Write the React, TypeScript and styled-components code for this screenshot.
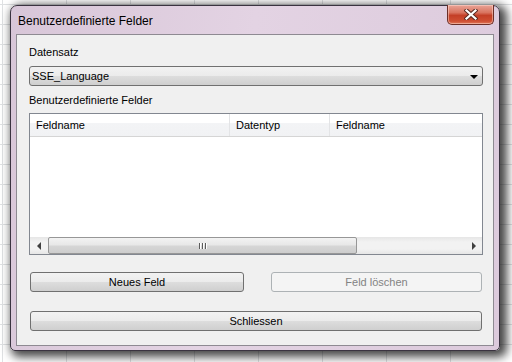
import styled, { createGlobalStyle } from "styled-components";

// Spalten der Feldliste
const columns = [
  { title: "Feldname", width: 200 },
  { title: "Datentyp", width: 100 },
  { title: "Feldname", width: 0 },
];

export default function App() {
  return (
    <>
      <GlobalStyle />
      <Sheet>
        <Window>
          <TitleBar>
            <Title>Benutzerdefinierte Felder</Title>
            <CloseButton aria-label="Schliessen">
              <svg width="14" height="11" viewBox="0 0 14 11">
                <path
                  d="M2.5 1.5 L11.5 9.5 M11.5 1.5 L2.5 9.5"
                  stroke="#5a2a22"
                  strokeWidth="4.2"
                  strokeLinecap="square"
                />
                <path
                  d="M2.5 1.5 L11.5 9.5 M11.5 1.5 L2.5 9.5"
                  stroke="#ffffff"
                  strokeWidth="2.2"
                  strokeLinecap="square"
                />
              </svg>
            </CloseButton>
          </TitleBar>

          <Client>
            <Label>Datensatz</Label>
            <Combo>
              <span>SSE_Language</span>
              <ComboArrow />
            </Combo>

            <Label $top={7}>Benutzerdefinierte Felder</Label>
            <ListView>
              <Header>
                {columns.map((col, i) => (
                  <HeaderCell key={i} $width={col.width}>
                    {col.title}
                  </HeaderCell>
                ))}
              </Header>
              <ListBody />
              <HScroll>
                <ScrollButton>
                  <Arrow $dir="left" />
                </ScrollButton>
                <Track>
                  <Thumb>
                    <Grip>
                      <i />
                      <i />
                      <i />
                    </Grip>
                  </Thumb>
                </Track>
                <ScrollButton>
                  <Arrow $dir="right" />
                </ScrollButton>
              </HScroll>
            </ListView>

            <ButtonRow>
              <Button>Neues Feld</Button>
              <Button disabled>Feld löschen</Button>
            </ButtonRow>
            <WideButton>Schliessen</WideButton>
          </Client>
        </Window>
      </Sheet>
    </>
  );
}

const GlobalStyle = createGlobalStyle`
  html, body {
    margin: 0;
    padding: 0;
  }
  body {
    font-family: "Liberation Sans", Arial, sans-serif;
    font-size: 11px;
    color: #000;
  }
`;

// Tabellenblatt im Hintergrund
const Sheet = styled.div`
  width: 512px;
  height: 362px;
  overflow: hidden;
  box-sizing: border-box;
  padding: 5px 0 0 10px;
  background-color: #ffffff;
  background-image:
    linear-gradient(to right, #dfe1e3 1px, transparent 1px),
    linear-gradient(to bottom, #dfe1e3 1px, transparent 1px);
  background-size: 64px 20px;
  background-position: 2px 4px;
`;

const Window = styled.div`
  width: 490px;
  height: 346px;
  box-sizing: border-box;
  border: 1px solid #3a3340;
  border-radius: 7px 7px 5px 5px;
  background: linear-gradient(100deg, #d8c6d8 0%, #e3d3e3 45%, #dccadc 100%);
  box-shadow: 4px 3px 10px 3px rgba(0, 0, 0, 0.72);
  display: flex;
  flex-direction: column;
`;

const TitleBar = styled.div`
  height: 28px;
  display: flex;
  justify-content: space-between;
  align-items: flex-start;
`;

const Title = styled.div`
  font-size: 12px;
  line-height: 12px;
  padding: 9px 0 0 7px;
  color: #000;
`;

const CloseButton = styled.button`
  margin: -1px 5px 0 0;
  width: 47px;
  height: 20px;
  padding: 0;
  display: flex;
  align-items: center;
  justify-content: center;
  border: 1px solid #6b2e27;
  border-top: none;
  border-radius: 0 0 5px 5px;
  background: linear-gradient(
    to bottom,
    #e9a497 0%,
    #d97460 40%,
    #c43f27 55%,
    #cf4f33 85%,
    #e07a5c 100%
  );
  box-shadow: inset 0 0 0 1px rgba(255, 220, 210, 0.5);
`;

const Client = styled.div`
  flex: 1;
  margin: 0 5px 4px 5px;
  border: 1px solid #8e8a92;
  background: #f0f0f0;
  padding: 10px 10px 0 12px;
  display: flex;
  flex-direction: column;
`;

const Label = styled.div<{ $top?: number }>`
  height: 14px;
  line-height: 14px;
  margin-top: ${(p) => p.$top ?? 0}px;
  margin-bottom: 6px;
  white-space: nowrap;
`;

const Combo = styled.div`
  height: 20px;
  box-sizing: border-box;
  margin-top: 1px;
  border: 1px solid #707070;
  border-radius: 3px;
  background: linear-gradient(to bottom, #f2f2f2 0%, #ebebeb 50%, #dddddd 51%, #cfcfcf 100%);
  display: flex;
  align-items: center;
  justify-content: space-between;
  padding: 0 4px 0 2px;
`;

const ComboArrow = styled.span`
  width: 0;
  height: 0;
  border-left: 4px solid transparent;
  border-right: 4px solid transparent;
  border-top: 4px solid #000;
  margin-top: 1px;
`;

const ListView = styled.div`
  height: 142px;
  box-sizing: border-box;
  border: 1px solid #828790;
  background: #fff;
  display: flex;
  flex-direction: column;
`;

const Header = styled.div`
  height: 23px;
  box-sizing: border-box;
  display: flex;
  border-bottom: 1px solid #d5d5d5;
  background: linear-gradient(to bottom, #ffffff 0%, #ffffff 40%, #f3f4f6 41%, #f1f2f4 100%);
`;

const HeaderCell = styled.div<{ $width: number }>`
  ${(p) => (p.$width ? `width: ${p.$width}px;` : "flex: 1;")}
  box-sizing: border-box;
  padding-left: 6px;
  line-height: 22px;
  border-right: ${(p) => (p.$width ? "1px solid #e3e4e6" : "none")};
`;

const ListBody = styled.div`
  flex: 1;
`;

const HScroll = styled.div`
  height: 17px;
  display: flex;
  background: linear-gradient(to bottom, #e6e6e6 0%, #f2f2f2 30%, #f2f2f2 70%, #e6e6e6 100%);
`;

const ScrollButton = styled.div`
  width: 17px;
  display: flex;
  align-items: center;
  justify-content: center;
`;

const Arrow = styled.span<{ $dir: "left" | "right" }>`
  width: 0;
  height: 0;
  border-top: 4px solid transparent;
  border-bottom: 4px solid transparent;
  ${(p) =>
    p.$dir === "left"
      ? "border-right: 4px solid #404040;"
      : "border-left: 4px solid #404040;"}
`;

const Track = styled.div`
  flex: 1;
  display: flex;
`;

const Thumb = styled.div`
  width: 309px;
  box-sizing: border-box;
  margin-left: 1px;
  border: 1px solid #979797;
  border-radius: 2px;
  background: linear-gradient(to bottom, #f3f3f3 0%, #e8e8e8 45%, #d6d6d6 55%, #cdcdcd 100%);
  display: flex;
  align-items: center;
  justify-content: center;
`;

const Grip = styled.div`
  display: flex;
  gap: 2px;
  i {
    display: block;
    width: 1px;
    height: 6px;
    background: #5c5c5c;
    box-shadow: 1px 0 0 #ffffff;
  }
`;

const ButtonRow = styled.div`
  display: flex;
  justify-content: space-between;
  margin: 17px 1px 0 1px;
`;

const Button = styled.button`
  width: 214px;
  height: 20px;
  padding: 0;
  font-family: "Liberation Sans", Arial, sans-serif;
  font-size: 11px;
  color: #000;
  border: 1px solid #707070;
  border-radius: 3px;
  background: linear-gradient(to bottom, #f2f2f2 0%, #ebebeb 50%, #dddddd 51%, #cfcfcf 100%);

  &:disabled {
    width: 211px;
    color: #838383;
    border-color: #adb2b5;
    background: #f4f4f4;
  }
`;

const WideButton = styled(Button)`
  width: auto;
  margin: 19px 1px 0 1px;
`;
